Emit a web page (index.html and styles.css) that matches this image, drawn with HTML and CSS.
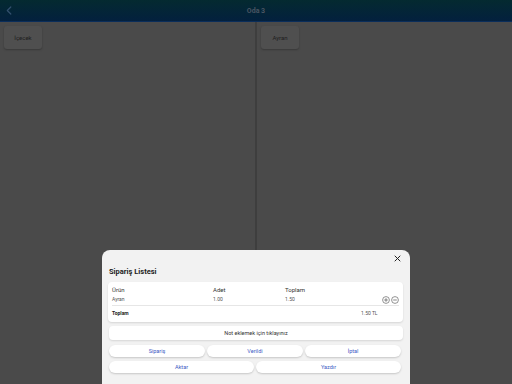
FILE: index.html
```html
<!DOCTYPE html>
<html lang="tr">
<head>
    <meta charset="UTF-8">
    <meta name="viewport" content="width=device-width, initial-scale=1.0">
    <title>Oda 3</title>
    <link rel="stylesheet" href="styles.css">
</head>
<body>
    <header class="topbar">
        <span class="back">
            <svg width="6" height="9" viewBox="0 0 6 9"><path d="M4.8 1 L1.3 4.5 L4.8 8" fill="none" stroke="#33506e" stroke-width="1.2" stroke-linecap="round" stroke-linejoin="round"/></svg>
        </span>
        <span class="title">Oda 3</span>
    </header>
    <div class="panes">
        <div class="pane">
            <div class="tile">İçecek</div>
        </div>
        <div class="divider"></div>
        <div class="pane">
            <div class="tile">Ayran</div>
        </div>
    </div>

    <div class="sheet">
        <div class="sheet-top">
            <span class="close">
                <svg width="7" height="7" viewBox="0 0 7 7"><path d="M1 1 L6 6 M6 1 L1 6" stroke="#222" stroke-width="1" stroke-linecap="round"/></svg>
            </span>
        </div>
        <h1 class="sheet-title">Sipariş Listesi</h1>
        <div class="card">
            <div class="row head">
                <span class="c1">Ürün</span>
                <span class="c2">Adet</span>
                <span class="c3">Toplam</span>
            </div>
            <div class="row item">
                <span class="c1">Ayran</span>
                <span class="c2">1.00</span>
                <span class="c3">1.50</span>
                <span class="qty">
                    <svg width="8" height="8" viewBox="0 0 8 8"><circle cx="4" cy="4" r="3.4" fill="none" stroke="#666" stroke-width="0.7"/><path d="M4 2.2 V5.8 M2.2 4 H5.8" stroke="#555" stroke-width="0.7"/></svg>
                    <svg width="8" height="8" viewBox="0 0 8 8"><circle cx="4" cy="4" r="3.4" fill="none" stroke="#666" stroke-width="0.7"/><path d="M2.2 4 H5.8" stroke="#555" stroke-width="0.7"/></svg>
                </span>
            </div>
            <div class="row total">
                <span class="c1">Toplam</span>
                <span class="sum">1.50 TL</span>
            </div>
        </div>
        <div class="note">Not eklemek için tıklayınız</div>
        <div class="actions three">
            <button class="pill">Sipariş</button>
            <button class="pill">Verildi</button>
            <button class="pill">İptal</button>
        </div>
        <div class="actions two">
            <button class="pill">Aktar</button>
            <button class="pill">Yazdır</button>
        </div>
    </div>
</body>
</html>
```

FILE: styles.css
```css
* {
    box-sizing: border-box;
    margin: 0;
    padding: 0;
}
html,
body {
    width: 512px;
    height: 384px;
    overflow: hidden;
}
body {
    font-family: Roboto, "Liberation Sans", sans-serif;
    background: #4a4a4a;
    position: relative;
}

/* dimmed page underneath */
.topbar {
    height: 22px;
    display: flex;
    align-items: center;
    justify-content: center;
    position: relative;
    background: linear-gradient(#042a30, #03203e);
    border-bottom: 1px solid #0a2d5a;
}
.back {
    position: absolute;
    left: 6px;
    top: 6px;
    line-height: 0;
}
.title {
    font-size: 7px;
    font-weight: bold;
    color: #4a5562;
}
.panes {
    display: flex;
    height: 362px;
}
.pane {
    flex: 1;
    padding: 4px;
}
.divider {
    width: 2px;
    background: #3e3e3e;
}
.tile {
    width: 38px;
    height: 23px;
    display: flex;
    align-items: center;
    justify-content: center;
    background: #4f4f4f;
    border-radius: 3px;
    box-shadow: 0 1px 2px rgba(0, 0, 0, 0.25);
    font-size: 6px;
    color: #1e1e1e;
}

/* order sheet */
.sheet {
    position: absolute;
    left: 102px;
    top: 250px;
    width: 308px;
    height: 150px;
    background: #f2f2f2;
    border-radius: 8px 8px 0 0;
    padding: 0 7px 0 7px;
}
.sheet-top {
    height: 12px;
    display: flex;
    justify-content: flex-end;
    align-items: flex-end;
}
.close {
    margin-right: 2px;
    line-height: 0;
}
.sheet-title {
    font-size: 7.5px;
    font-weight: bold;
    color: #222;
    margin-top: 5px;
    height: 15px;
}
.card {
    background: #fff;
    border-radius: 4px;
    margin-left: -1px;
    padding: 3px 4px 0 4px;
    box-shadow: 0 1px 2px rgba(0, 0, 0, 0.12);
    height: 40px;
}
.row {
    display: flex;
    align-items: center;
}
.c1 {
    width: 101px;
}
.c2 {
    width: 72px;
}
.c3 {
    flex: 1;
}
.head {
    font-size: 6px;
    color: #333;
    height: 9px;
}
.item {
    font-size: 5px;
    color: #555;
    height: 12px;
    border-bottom: 1px solid #e6e6e6;
    padding-bottom: 1px;
}
.qty {
    display: flex;
    gap: 1px;
    margin-top: 2px;
    line-height: 0;
}
.total {
    height: 13px;
    font-size: 5px;
    font-weight: bold;
    color: #222;
}
.total .c1 {
    flex: 1;
}
.sum {
    font-weight: normal;
    color: #555;
    width: 38px;
}
.note {
    margin-top: 4px;
    height: 14px;
    background: #fff;
    border-radius: 4px;
    display: flex;
    align-items: center;
    justify-content: center;
    font-size: 5.5px;
    color: #333;
    box-shadow: 0 1px 2px rgba(0, 0, 0, 0.12);
}
.actions {
    display: flex;
    gap: 2px;
    margin-top: 5px;
    padding-right: 2px;
}
.actions.two {
    margin-top: 4px;
}
.pill {
    flex: 1;
    height: 12px;
    border: none;
    border-radius: 6px;
    background: #fff;
    font-family: Roboto, "Liberation Sans", sans-serif;
    font-size: 5.5px;
    color: #3d5bc4;
    box-shadow: 0 1px 2px rgba(0, 0, 0, 0.18);
}
```
